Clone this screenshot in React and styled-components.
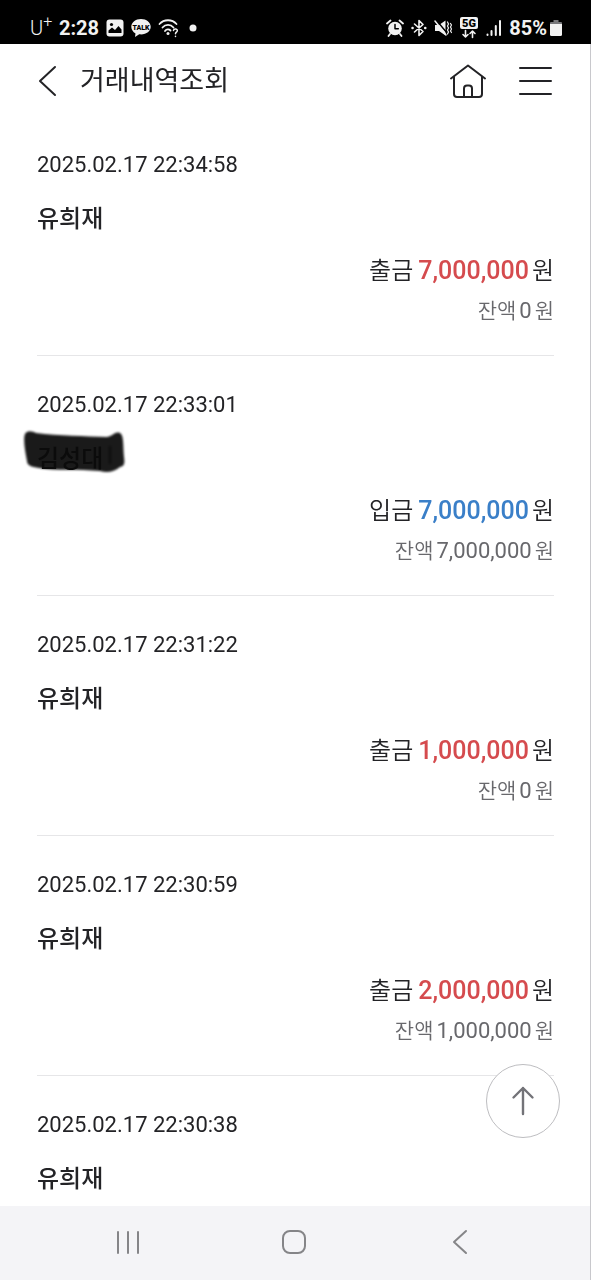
import styled, {createGlobalStyle} from "styled-components";

const GlobalStyle = createGlobalStyle`
    * {
        box-sizing: border-box;
    }

    body {
        margin: 0;
        background: #fff;
        font-family: Roboto, 'Noto Sans CJK KR', sans-serif;
        color: #232326;
    }

    button {
        display: flex;
        align-items: center;
        justify-content: center;
        margin: 0;
        padding: 0;
        border: 0;
        background: none;
        color: inherit;
        font: inherit;
        cursor: pointer;
    }

    svg {
        display: block;
    }
`;

const Phone = styled.div`
    display: flex;
    flex-direction: column;
    height: 100vh;
`;

const StatusBar = styled.div`
    display: flex;
    justify-content: space-between;
    flex: none;
    height: 44px;
    padding: 12px 28px 0 30px;
    background: #000;
    color: #f2f2f2;
`;

const StatusGroup = styled.div`
    display: flex;
    align-items: center;
    gap: ${({$gap}) => $gap}px;
    height: 32px;
`;

const Carrier = styled.span`
    display: flex;
    width: 22px;
    font-size: 20px;
    font-weight: 300;
    line-height: 24px;

    sup {
        font-size: 16px;
        line-height: 12px;
    }
`;

const StatusText = styled.span`
    font-size: 20px;
    font-weight: 700;
    line-height: 24px;
    white-space: nowrap;
`;

const Screen = styled.div`
    position: relative;
    display: flex;
    flex: 1;
    flex-direction: column;
    min-height: 0;
    border-right: 1px solid #c8c8cc;
`;

const Header = styled.header`
    display: flex;
    align-items: center;
    flex: none;
    height: 72px;
    padding: 2px 37px 0 36px;
`;

const Title = styled.h1`
    flex: 1;
    margin: 0 0 0 20px;
    font-size: 27px;
    font-weight: 400;
    line-height: 40px;
`;

const HeaderActions = styled.div`
    display: flex;
    align-items: center;
    gap: 30px;
`;

const List = styled.ul`
    flex: 1;
    min-height: 0;
    margin: 0;
    padding: 0 36px 0 37px;
    overflow-y: auto;
    list-style: none;
    scrollbar-width: none;
`;

const Item = styled.li`
    display: flex;
    flex-direction: column;
    padding: 36px 0 31px;
    border-bottom: 1px solid #e6e6e8;
`;

const DateTime = styled.time`
    font-size: 22px;
    line-height: 26px;
`;

const Name = styled.strong`
    position: relative;
    align-self: flex-start;
    margin-top: 27px;
    font-size: 24px;
    font-weight: 500;
    line-height: 28px;
    color: ${({$hidden}) => ($hidden ? "#0b0b0b" : "inherit")};
`;

const Scribble = styled.svg`
    position: absolute;
    z-index: -1;
    top: -16px;
    left: -14px;
    overflow: visible;
    filter: blur(1px);
`;

const Amount = styled.p`
    display: flex;
    justify-content: flex-end;
    gap: 3px;
    margin: 23px 0 0;
    font-size: 24px;
    font-weight: 350;
    line-height: 30px;
`;

const Sum = styled.b`
    margin-left: 2px;
    font-size: 25px;
    font-weight: 500;
    color: ${({$deposit}) => ($deposit ? "#3a7fc8" : "#d54b4e")};
`;

const Balance = styled.p`
    display: flex;
    justify-content: flex-end;
    gap: 3px;
    margin: 12px 0 0;
    font-size: 21px;
    font-weight: 350;
    line-height: 26px;
    color: #68686c;
`;

const BalanceSum = styled.span`
    font-size: 22px;
    font-weight: 400;
`;

const TopButton = styled.button`
    && {
        position: absolute;
        right: 30px;
        bottom: 68px;
        width: 74px;
        height: 74px;
        border: 1px solid #bdbdc0;
        border-radius: 50%;
        background: #fff;
        color: #737378;
    }
`;

const SystemNav = styled.nav`
    display: grid;
    grid-template-columns: repeat(3, 166px);
    justify-content: center;
    align-items: center;
    flex: none;
    height: 74px;
    padding: 0 2px 3px 0;
    border-right: 1px solid #c8c8cc;
    background: #f4f4f7;
    color: #858588;
`;

const transactions = [
    {date: "2025.02.17 22:34:58", name: "유희재", amount: "7,000,000", balance: "0"},
    {date: "2025.02.17 22:33:01", name: "김성대", amount: "7,000,000", balance: "7,000,000", deposit: true, hidden: true},
    {date: "2025.02.17 22:31:22", name: "유희재", amount: "1,000,000", balance: "0"},
    {date: "2025.02.17 22:30:59", name: "유희재", amount: "2,000,000", balance: "1,000,000"},
    {date: "2025.02.17 22:30:38", name: "유희재"},
];

function Icon({width, height, stroke = 2, children}) {
    return (
        <svg width={width} height={height} viewBox={`0 0 ${width} ${height}`} fill="none" stroke="currentColor"
             strokeWidth={stroke} strokeLinecap="round" strokeLinejoin="round" aria-hidden="true">
            {children}
        </svg>
    );
}

function StatusIcons() {
    return (
        <StatusBar>
            <StatusGroup $gap={7}>
                <Carrier>U<sup>+</sup></Carrier>
                <StatusText>2:28</StatusText>
                <Icon width={18} height={18}>
                    <rect x="0.5" y="0.5" width="17" height="17" rx="3" fill="currentColor" stroke="none"/>
                    <circle cx="5.5" cy="5.5" r="1.6" fill="#000" stroke="none"/>
                    <path d="M2.5 14V11.5L6 8.5l3 2.5 3.5-4 3 3.5V14Z" fill="#000" stroke="none"/>
                </Icon>
                <Icon width={20} height={20}>
                    <path d="M10 1C4.5 1 .3 4.4 .3 8.8c0 2.9 1.7 5.2 4.2 6.6L4 19l4.2-2.7c6.5.8 11.5-2.7 11.5-7.5C19.7 4.4 15.5 1 10 1Z"
                          fill="currentColor" stroke="none"/>
                    <text x="10" y="11.5" textAnchor="middle" fontFamily="Roboto" fontSize="7" fontWeight="900"
                          fill="#000" stroke="none">TALK</text>
                </Icon>
                <Icon width={22} height={20} stroke={1.8}>
                    <path d="M1.5 6C6 1 14 1 18.5 6M4.5 9.5c3-3.5 8-3.5 11 0M7 13c1.5-2 4-2 5.5-.5"/>
                    <circle cx="10" cy="15.5" r="1.5" fill="currentColor" stroke="none"/>
                    <path d="M15.5 12.5c.2-2.3 4-2 3.8.3-.2 1.3-1.8 1.5-1.8 3M17.5 18.3v.1" strokeWidth="1.5"/>
                </Icon>
                <Icon width={12} height={18}>
                    <circle cx="6" cy="9" r="3.5" fill="currentColor" stroke="none"/>
                </Icon>
            </StatusGroup>
            <StatusGroup $gap={7}>
                <Icon width={18} height={18}>
                    <circle cx="9" cy="9.5" r="6.8" fill="currentColor" stroke="none"/>
                    <path d="M1 4.5 4.5 1.5M17 4.5l-3.5-3M4 15l-1.5 2M14 15l1.5 2" strokeWidth="1.8"/>
                    <path d="M9 5.5v4.200h3.300" stroke="#000" strokeWidth="1.5"/>
                </Icon>
                <Icon width={16} height={18} stroke={1.6}>
                    <path d="M3.5 5 12 12.5 8 16.5V1.5L12 5.5 3.5 13"/>
                    <path d="M1.5 9h.1M14.200 9h.1" strokeWidth="2.5"/>
                </Icon>
                <Icon width={18} height={18} stroke={1.5}>
                    <path d="M1 6h4l6.500-4.500v15L5 12H1Z" fill="currentColor" stroke="none"/>
                    <path d="M2.500 1.500 13.500 14.500" stroke="#000" strokeWidth="1.500"/>
                    <path d="M1 2 12 16"/>
                    <path d="M13.500 3l1 2-1 2 1 2-1 2 1 2-1 2M16.500 4.500l1 1.500-1 2 1 2-1 2 1 1.500" strokeWidth="1.200"/>
                </Icon>
                <Icon width={20} height={22} stroke={1.6}>
                    <rect x="1" y="0" width="18" height="12" rx="2" fill="currentColor" stroke="none"/>
                    <text x="10" y="10" textAnchor="middle" fontFamily="Roboto" fontSize="11" fontWeight="900"
                          fill="#000" stroke="none">5G</text>
                    <path d="M6.5 13.5v6M4 17.5l2.5 2.5L9 17.5M13.5 20.5v-6M11 16.5l2.5-2.5 2.5 2.5"/>
                </Icon>
                <Icon width={16} height={18}>
                    <path d="M1.5 15.5v.5M5.5 12v4M9.8 7v9M14 2v14"/>
                </Icon>
                <StatusGroup $gap={2}>
                    <StatusText>85%</StatusText>
                    <Icon width={14} height={18}>
                        <path d="M4.5 1h5v2H12a1 1 0 0 1 1 1v2H1V4a1 1 0 0 1 1-1h2.5Z" fill="#77777a" stroke="none"/>
                        <path d="M1 5h12v10.500a1.500 1.500 0 0 1-1.500 1.500h-9A1.500 1.500 0 0 1 1 15.500Z" fill="currentColor" stroke="none"/>
                    </Icon>
                </StatusGroup>
            </StatusGroup>
        </StatusBar>
    );
}

function Transaction({date, name, amount, balance, deposit, hidden}) {
    return (
        <Item>
            <DateTime>{date}</DateTime>
            <Name $hidden={hidden}>
                {hidden && (
                    <Scribble width="102" height="46" viewBox="0 0 102 46" aria-hidden="true">
                        <path d="M2 5C4 1 9 2 13 4c23 3 49 3 71 4 6-1 8-6 13-4 4 2 3 13 4 24 1 7 0 9-4 10-6 5-13 6-20 4-23-2-43 0-61-3C8 38 4 36 4 32 2 22 0 10 2 5Z"
                              fill="#1a1a1a"/>
                        <path d="M87 17v18" stroke="#101010" strokeWidth="3"/>
                    </Scribble>
                )}
                {name}
            </Name>
            {amount && (
                <>
                    <Amount>
                        {deposit ? "입금" : "출금"}
                        <Sum $deposit={deposit}>{amount}</Sum>
                        원
                    </Amount>
                    <Balance>
                        잔액
                        <BalanceSum>{balance}</BalanceSum>
                        원
                    </Balance>
                </>
            )}
        </Item>
    );
}

export default function App() {
    return (
        <Phone>
            <GlobalStyle/>
            <StatusIcons/>

            <Screen>
                <Header>
                    <button type="button" aria-label="이전">
                        <Icon width={24} height={32}>
                            <path d="M19 2 4 16l15 14"/>
                        </Icon>
                    </button>
                    <Title>거래내역조회</Title>
                    <HeaderActions>
                        <button type="button" aria-label="홈">
                            <Icon width={38} height={36}>
                                <path d="M2 15.5 19 2.5l17 13M5 14v17a3 3 0 0 0 3 3h22a3 3 0 0 0 3-3V14"/>
                                <path d="M15 34V25.500a3 3 0 0 1 3-3h2a3 3 0 0 1 3 3V34"/>
                            </Icon>
                        </button>
                        <button type="button" aria-label="메뉴">
                            <Icon width={36} height={30}>
                                <path d="M3 2h31M3 15h31M3 28h31"/>
                            </Icon>
                        </button>
                    </HeaderActions>
                </Header>

                <List>
                    {transactions.map((item) => (
                        <Transaction key={item.date} {...item}/>
                    ))}
                </List>

                <TopButton type="button" aria-label="맨 위로">
                    <Icon width={24} height={30} stroke={2.4}>
                        <path d="M12 28V2M2.5 11.5 12 2l9.5 9.5"/>
                    </Icon>
                </TopButton>
            </Screen>

            <SystemNav>
                <button type="button" aria-label="최근 앱">
                    <Icon width={26} height={26}>
                        <path d="M3 3v21M13 3v21M23 3v21"/>
                    </Icon>
                </button>
                <button type="button" aria-label="홈 화면">
                    <Icon width={26} height={26}>
                        <rect x="2" y="2" width="22" height="22" rx="7"/>
                    </Icon>
                </button>
                <button type="button" aria-label="뒤로">
                    <Icon width={16} height={26}>
                        <path d="M14 2 2 13l12 11"/>
                    </Icon>
                </button>
            </SystemNav>
        </Phone>
    );
}
